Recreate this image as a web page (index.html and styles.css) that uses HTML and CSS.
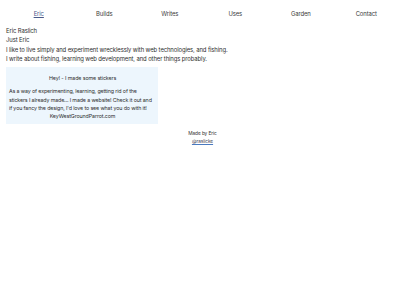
FILE: index.html
```html
<!DOCTYPE html>
<html>
<head>
<meta charset="utf-8">
<link rel="stylesheet" href="styles.css">
</head>
<body>
<nav class="nav">
  <a class="nav-item active" href="#">Eric</a>
  <a class="nav-item" href="#">Builds</a>
  <a class="nav-item" href="#">Writes</a>
  <a class="nav-item" href="#">Uses</a>
  <a class="nav-item" href="#">Garden</a>
  <a class="nav-item" href="#">Contact</a>
</nav>
<main class="main">
  <p class="line">Eric Raslich</p>
  <p class="line">Just Eric</p>
  <p class="line">I like to live simply and experiment wrecklessly with web technologies, and fishing.</p>
  <p class="line">I write about fishing, learning web development, and other things probably.</p>
  <section class="card">
    <h2 class="card-title">Hey! - I made some stickers</h2>
    <p class="card-text">As a way of experimenting, learning, getting rid of the stickers I already made... I made a website! Check it out and if you fancy the design, I'd love to see what you do with it!</p>
    <p class="card-link">KeyWestGroundParrot.com</p>
  </section>
</main>
<footer class="footer">
  <div>Made by Eric</div>
  <a class="footer-link" href="#">@raslicke</a>
</footer>
</body>
</html>
```
FILE: styles.css
```css
html, body {
  margin: 0;
  padding: 0;
  background: #ffffff;
}
body {
  font-family: Inter, sans-serif;
  color: #2e2e2e;
  padding: 0 6px;
  letter-spacing: -0.1px;
}
.nav {
  display: flex;
  padding-top: 10px;
  height: 23px;
  box-sizing: border-box;
}
.nav-item {
  flex: 1;
  text-align: center;
  font-size: 5.9px;
  line-height: 8px;
  color: #3a3a3a;
  text-decoration: none;
}
.nav-item.active {
  color: #4a5a8a;
  text-decoration: underline;
}
.main {
  padding-top: 3px;
}
.line {
  margin: 0;
  font-size: 5.9px;
  line-height: 9.4px;
}
.card {
  margin-top: 3px;
  width: 152px;
  background: #edf6fd;
  padding: 7px 2px 3px 3px;
  box-sizing: border-box;
}
.card-title {
  margin: 0 0 5.5px;
  font-size: 5.3px;
  font-weight: normal;
  text-align: center;
  line-height: 8px;
}
.card-text {
  margin: 0;
  font-size: 5.3px;
  line-height: 8.4px;
  letter-spacing: -0.12px;
}
.card-link {
  margin: 0;
  font-size: 5.3px;
  line-height: 8.4px;
  text-align: center;
}
.footer {
  margin-top: 5px;
  text-align: center;
  font-size: 4.8px;
  line-height: 8px;
  color: #333;
}
.footer-link {
  color: #445;
  text-decoration: underline;
  text-decoration-color: #4a7ac0;
}
```
